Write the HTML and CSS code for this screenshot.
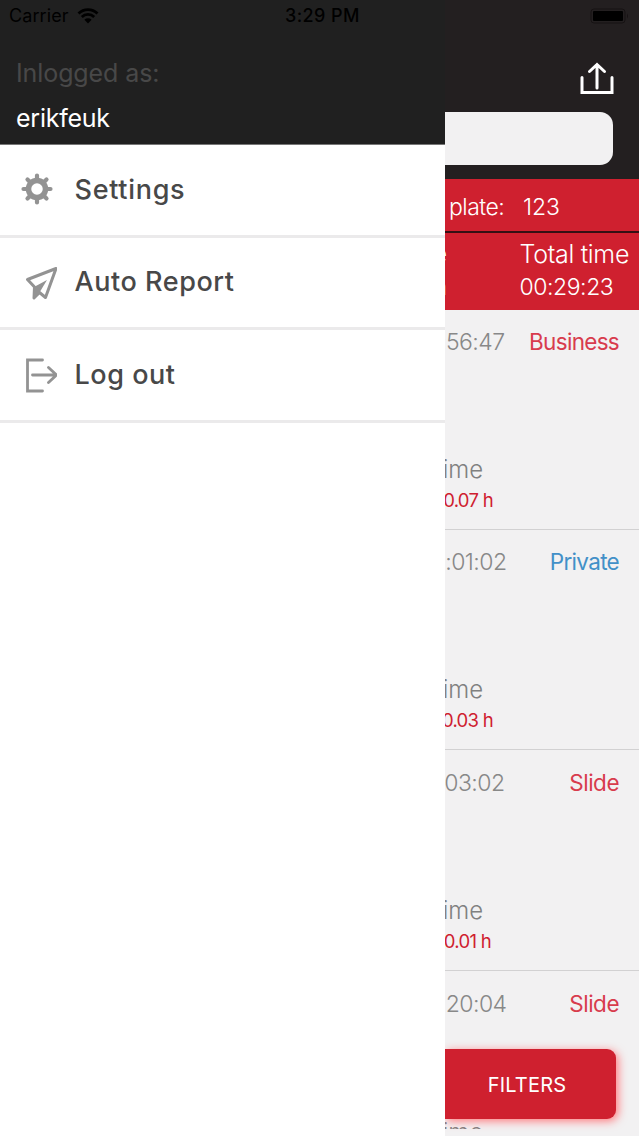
FILE: index.html
```html
<!DOCTYPE html>
<html lang="en">
<head>
<meta charset="utf-8">
<title>Trips</title>
<link rel="stylesheet" href="styles.css">
</head>
<body>
<div class="app">
  <div class="status">
    <span class="carrier">Carrier</span>
    <svg class="wifi" width="22" height="16" viewBox="0 0 22 16"><path d="M1.5 5.5a13.5 13.5 0 0 1 19 0M4.800 9a8.800 8.800 0 0 1 12.400 0" fill="none" stroke="#000" stroke-width="2.800"/><path d="M11 15.500l-3.600-3.700a5.200 5.200 0 0 1 7.200 0z"/></svg>
    <span class="clock">3:29 PM</span>
    <svg class="battery" width="40" height="16" viewBox="0 0 40 16"><rect x="1" y="1" width="34" height="14" rx="3" fill="none" stroke="#161213"/><rect x="3" y="3" width="30" height="10" rx="1"/><path d="M37 5.500q2 2.500 0 5z" fill="#161213"/></svg>
  </div>
  <aside class="drawer">
    <header class="user">
      <div class="label">Inlogged as:</div>
      <div class="name">erikfeuk</div>
    </header>
    <nav class="menu">
      <a class="item">
        <svg class="icon" width="40" height="40" viewBox="0 0 40 40"><g fill="none" stroke="#939393"><circle cx="20" cy="21" r="8.500" stroke-width="5.500"/><path d="M20 12V7.500M20 30V34.500M11 21H6.500M29 21h4.500M13.500 14.500l-3-3M26.500 27.500l3 3M13.500 27.500l-3 3M26.500 14.500l3-3" stroke-width="4.200" stroke-linecap="round"/></g></svg>
        <span class="settings">Settings</span>
      </a>
      <a class="item">
        <svg class="icon" width="40" height="40" viewBox="0 0 40 40"><path d="M10.500 18.500L39 7.500 28.500 36.500 22.500 31.500 17 37 17.500 26z" fill="none" stroke="#939393" stroke-width="3" stroke-linejoin="round"/><path d="M17 26L30 19 22.500 31.500 17 37z" fill="#939393"/></svg>
        <span class="report">Auto Report</span>
      </a>
      <a class="item">
        <svg class="icon" width="40" height="40" viewBox="0 0 40 40"><path d="M25.500 7H10.500v31h15M15.500 22h23.500M31.500 14.500l8 7.500-8 7.500" fill="none" stroke="#939393" stroke-width="2.800" stroke-linecap="round"/></svg>
        <span class="logout">Log out</span>
      </a>
    </nav>
  </aside>
  <main class="page">
    <header class="top">
      <svg class="share" width="36" height="34" viewBox="0 0 36 34"><path d="M3 15.500V30.500h30V15.500M18 26V2.500M10.500 9.500L18 2.500l7.500 7" fill="none" stroke="#fff" stroke-width="3" stroke-linecap="round"/></svg>
      <div class="search"></div>
    </header>
    <div class="plate"><span class="plate-label">plate:</span><span class="plate-no">123</span></div>
    <div class="totals">
      <div class="edge"><span>e</span><span>n</span></div>
      <div class="total"><span class="total-title">Total time</span><span class="total-value">00:29:23</span></div>
    </div>
    <section class="trip">
      <div class="head"><span class="clocktime t1">:56:47</span><span class="kind business">Business</span></div>
      <div class="time">Time</div><div class="hours h1">0.07 h</div>
    </section>
    <section class="trip">
      <div class="head"><span class="clocktime t2">:01:02</span><span class="kind private">Private</span></div>
      <div class="time">Time</div><div class="hours h2">0.03 h</div>
    </section>
    <section class="trip">
      <div class="head"><span class="clocktime t3">03:02</span><span class="kind slide">Slide</span></div>
      <div class="time">Time</div><div class="hours h3">0.01 h</div>
    </section>
    <section class="trip last">
      <div class="head"><span class="clocktime t4">:20:04</span><span class="kind slide">Slide</span></div>
      <div class="time">Time</div>
    </section>
    <button class="filters">FILTERS</button>
  </main>
</div>
</body>
</html>
```
FILE: styles.css
```css
* { box-sizing: border-box; }
body { margin: 0; font-family: Inter, "Liberation Sans", sans-serif; }
.app { position: relative; display: flex; width: 639px; height: 1136px; overflow: hidden; background: #fff; }
.status { position: absolute; z-index: 2; top: 0; left: 0; width: 639px; height: 32px; display: grid; grid-template-columns: 68px 208px 1fr 49px; align-items: center; padding-left: 9px; color: #000; font-size: 18px; line-height: 32px; }
.carrier { letter-spacing: .1px; }
.clock { font-weight: 500; letter-spacing: .4px; }
.drawer { width: 445px; flex: none; background: #fff; }
.user { height: 145px; padding: 57px 16px 0; background: #202020; border-bottom: 1px solid #777; }
.label { font-size: 25px; line-height: 32px; letter-spacing: -.1px; color: #484848; }
.name { margin-top: 13px; font-size: 25px; line-height: 32px; letter-spacing: -.25px; color: #fff; }
.menu { display: flex; flex-direction: column; }
.item { display: flex; align-items: center; gap: 17.500px; height: 92.600px; padding: 0 0 3px 17px; border-bottom: 3px solid #ebeaeb; font-size: 27px; font-weight: 500; letter-spacing: .55px; color: #484848; }
.settings { letter-spacing: .7px; }
.icon { flex: none; }
.item span { padding-top: 2px; }
.page { width: 194px; flex: none; background: #f2f1f2; overflow: hidden; }
.top { height: 179px; padding-top: 62px; background: #231f20; }
.share { display: block; margin: 0 0 16px 134px; }
.search { width: 168px; height: 53px; border-radius: 0 13px 13px 0; background: #f2f1f2; }
.plate { display: flex; align-items: center; height: 54px; padding: 3px 0 0 4px; background: #cf202f; border-bottom: 2px solid #351014; color: #fff; font-size: 23px; font-weight: 300; letter-spacing: -.5px; }
.plate-label { width: 74px; }
.plate-no { letter-spacing: -.1px; }
.totals { display: flex; height: 76.500px; background: #cf202f; color: #fff; font-weight: 300; }
.edge { display: flex; flex-direction: column; align-items: flex-end; width: 2px; margin-right: 72.500px; overflow: hidden; font-size: 23px; line-height: 33px; padding-top: 5px; }
.total { display: flex; flex-direction: column; padding-top: 4.500px; white-space: nowrap; }
.total-title { font-size: 25px; line-height: 32px; letter-spacing: -.3px; }
.total-value { font-size: 23px; line-height: 35px; letter-spacing: -.45px; }
.trip { height: 220.800px; padding-top: 14.500px; border-bottom: 1.500px solid #d2d1d2; overflow: hidden; }
.totals + .trip { height: 220px; }
.last { height: 158px; border-bottom: 0; }
.head { display: flex; justify-content: flex-end; height: 36px; line-height: 36px; padding-right: 20px; font-size: 23px; color: #888; font-weight: 300; }
.clocktime { flex: none; display: flex; justify-content: flex-end; margin-right: auto; letter-spacing: -.55px; }
.t1 { width: 59.500px; } .t2 { width: 61.500px; } .t3 { width: 59.500px; } .t4 { width: 61.500px; }
.kind { color: #d83b4d; font-size: 22.500px; font-weight: 400; letter-spacing: -.7px; }
.private { color: #4290c8; letter-spacing: -.7px; }
.slide { letter-spacing: -.5px; }
.time { display: flex; justify-content: flex-end; width: 38px; margin-top: 94px; font-size: 24px; line-height: 32px; font-weight: 300; letter-spacing: -.1px; color: #808080; }
.last .time { margin-top: 95px; }
.hours { display: flex; justify-content: flex-end; width: 48px; font-size: 18.500px; line-height: 28px; letter-spacing: -.7px; color: #cf202f; white-space: nowrap; }
.h3 { width: 46px; }
.filters { position: absolute; left: 445px; top: 1049px; width: 171px; height: 70px; padding: 1px 7px 0 0; border: 0; border-radius: 0 9px 9px 0; background: #cf202f; box-shadow: 2px 2px 10px #ff777b; clip-path: inset(-12px -20px -20px 0); color: #fff; font: 400 20px Inter, sans-serif; letter-spacing: .2px; }
```
